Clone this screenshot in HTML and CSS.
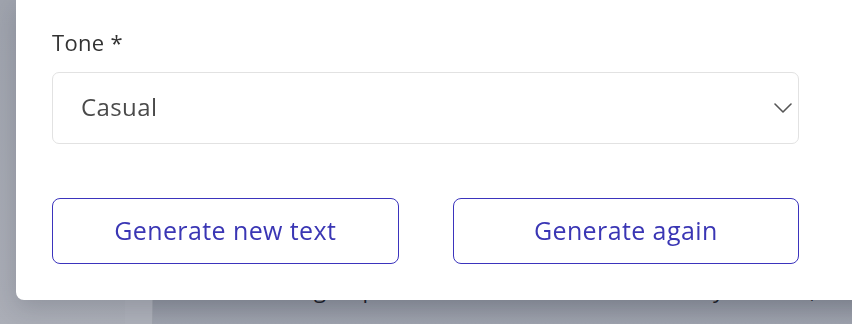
FILE: index.html
```html
<!DOCTYPE html>
<html lang="en">
<head>
    <meta charset="UTF-8">
    <meta name="viewport" content="width=device-width, initial-scale=1.0">
    <title>Generate text</title>
    <link rel="stylesheet" href="styles.css">
</head>
<body>
    <div class="page">
        <div class="sidebar"></div>
        <div class="rail"></div>
        <div class="content">
            <p class="behind">
                <span>Reading</span>
                <span>up</span>
                <span>on all the content today</span>
                <span>too,</span>
            </p>
        </div>
    </div>

    <div class="overlay">
        <div class="modal">
            <label class="field-label" for="tone">Tone *</label>
            <div class="select-wrap">
                <select id="tone" class="select">
                    <option>Casual</option>
                    <option>Formal</option>
                    <option>Friendly</option>
                </select>
                <svg class="chevron" width="18" height="10" viewBox="0 0 18 10" fill="none">
                    <path d="M1 1l8 8 8-8" stroke="#555" stroke-width="1.6" stroke-linecap="round" stroke-linejoin="round"/>
                </svg>
            </div>
            <div class="actions">
                <button class="btn">Generate new text</button>
                <button class="btn">Generate again</button>
            </div>
        </div>
    </div>
</body>
</html>
```

FILE: styles.css
```css
body {
    margin: 0;
    font-family: "Open Sans", "Noto Sans", sans-serif;
    height: 324px;
    overflow: hidden;
}

.page {
    display: flex;
    height: 100%;
}

.sidebar {
    width: 125px;
    background: linear-gradient(#9fa3ad, #abaeb7);
}

.rail {
    width: 27px;
    background: #adb0b9;
    border-right: 1px solid #9ea2ab;
}

.content {
    flex: 1;
    background: linear-gradient(#8b909b 0%, #8b909b 90%, #9ea2ad 100%);
}

.behind {
    display: grid;
    grid-template-columns: 173px 50px 348px 92px;
    margin: 274px 0 0 0;
    font-size: 22px;
    line-height: 30px;
    color: #1d1f2a;
    white-space: nowrap;
}

.behind span {
    text-align: right;
}

.overlay {
    position: fixed;
    inset: 0;
}

.modal {
    margin-left: 16px;
    margin-right: -40px;
    height: 300px;
    box-sizing: border-box;
    background: #fff;
    border-radius: 0 0 8px 8px;
    box-shadow: 0 8px 24px rgba(30, 34, 48, 0.18);
    padding: 28px 93px 0 36px;
}

.field-label {
    display: block;
    font-size: 22px;
    letter-spacing: 0.3px;
    line-height: 28px;
    color: #333;
    margin-bottom: 16px;
}

.select-wrap {
    position: relative;
}

.select {
    width: 100%;
    height: 72px;
    appearance: none;
    background: #fff;
    border: 1px solid #e2e2e2;
    border-radius: 7px;
    padding: 0 28px 3px;
    font-family: inherit;
    font-size: 24px;
    letter-spacing: 0.4px;
    color: #4a4a4a;
}

.chevron {
    position: absolute;
    right: 7px;
    top: 31px;
    pointer-events: none;
}

.actions {
    display: flex;
    gap: 54px;
    margin-top: 54px;
}

.btn {
    flex: 1;
    height: 66px;
    padding-bottom: 4px;
    background: #fff;
    border: 1px solid #3b34bd;
    border-radius: 8px;
    font-family: inherit;
    font-size: 25px;
    letter-spacing: 0.4px;
    color: #3a36b4;
    cursor: pointer;
}
```
